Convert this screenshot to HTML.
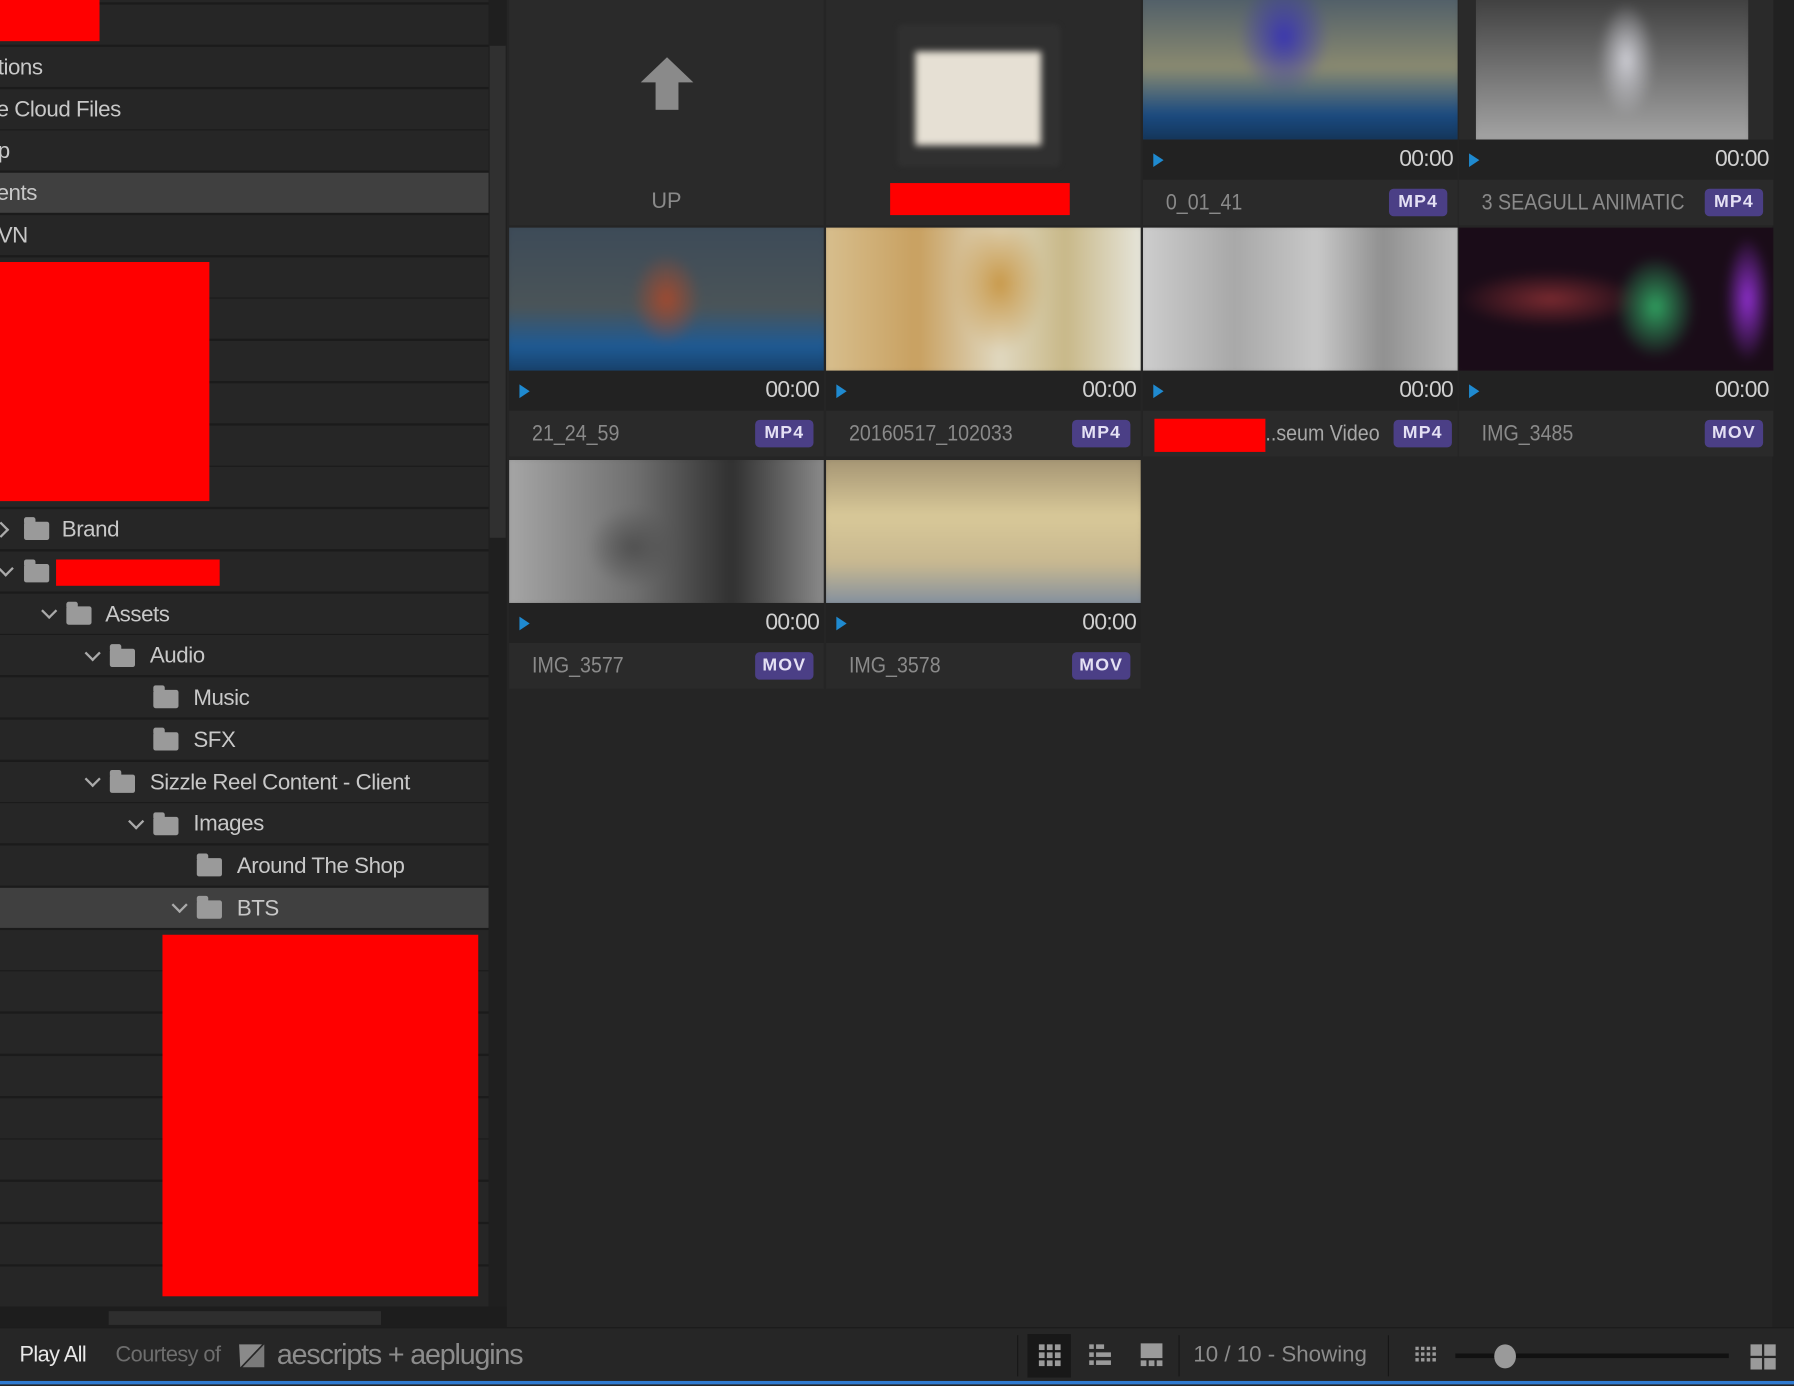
<!DOCTYPE html>
<html><head><meta charset="utf-8"><style>
html,body{margin:0;padding:0;background:#252525;overflow:hidden;width:1794px;height:1384px}
#s{position:absolute;left:0;top:0;width:1568px;height:1210px;transform:scale(1.14413);transform-origin:0 0;font-family:"Liberation Sans",sans-serif;background:#252525}
.a{position:absolute}
.row{position:absolute;left:0;width:427px;height:35px;background:#262626;border-bottom:2px solid #1b1b1b}
.t{position:absolute;color:#c8c8c8;font-size:19.5px;line-height:35px;white-space:nowrap;letter-spacing:-0.4px}
.fd{position:absolute;width:22px;height:16px;background:#9a9a9a;border-radius:2px}
.fd:before{content:"";position:absolute;left:0;top:-4px;width:10px;height:5px;background:#9a9a9a;border-radius:2px 2px 0 0}
.ch{position:absolute;width:8px;height:8px;border-right:2px solid #aaa;border-bottom:2px solid #aaa}
.card{position:absolute;width:275px;height:200px;background:#2a2a2a}
.clip{position:absolute;left:0;top:0;width:275px;height:125px;overflow:hidden}
.th{position:absolute;left:-6px;top:-6px;right:-6px;bottom:-6px;filter:blur(4px)}
.tm{position:absolute;left:0;top:125px;width:275px;height:35px;background:#222}
.pl{position:absolute;left:9px;top:12px;width:0;height:0;border-left:9px solid #1f8ad0;border-top:6px solid transparent;border-bottom:6px solid transparent}
.tt{position:absolute;right:4px;top:0;line-height:35px;color:#d0d0d0;font-size:20px;letter-spacing:-0.6px}
.lb{position:absolute;left:20px;top:160px;line-height:40px;color:#8a8a8a;font-size:19.5px;white-space:nowrap;transform:scaleX(0.88);transform-origin:0 50%}
.bd{position:absolute;right:9px;top:168px;width:51px;height:24px;background:#4b3f86;border-radius:4px;color:#e4e0f4;font-weight:bold;font-size:15.5px;line-height:24px;text-align:center;letter-spacing:1px}
.sep{position:absolute;top:1167px;width:1px;height:36px;background:#171717}
</style></head><body><div id="s">
<div class="a" style="left:0;top:0;width:427px;height:1142px;background:#1b1b1b"></div>
<div class="row" style="top:-33px"></div>
<div class="row" style="top:4px"></div>
<div class="row" style="top:41px"></div>
<div class="row" style="top:78px"></div>
<div class="row" style="top:114px"></div>
<div class="row" style="top:151px;background:#404040"></div>
<div class="row" style="top:188px"></div>
<div class="row" style="top:225px"></div>
<div class="row" style="top:261px"></div>
<div class="row" style="top:298px"></div>
<div class="row" style="top:335px"></div>
<div class="row" style="top:372px"></div>
<div class="row" style="top:408px"></div>
<div class="row" style="top:445px"></div>
<div class="row" style="top:482px"></div>
<div class="row" style="top:519px"></div>
<div class="row" style="top:555px"></div>
<div class="row" style="top:592px"></div>
<div class="row" style="top:629px"></div>
<div class="row" style="top:666px"></div>
<div class="row" style="top:702px"></div>
<div class="row" style="top:739px"></div>
<div class="row" style="top:776px;background:#404040"></div>
<div class="row" style="top:813px"></div>
<div class="row" style="top:849px"></div>
<div class="row" style="top:886px"></div>
<div class="row" style="top:923px"></div>
<div class="row" style="top:960px"></div>
<div class="row" style="top:996px"></div>
<div class="row" style="top:1033px"></div>
<div class="row" style="top:1070px"></div>
<div class="row" style="top:1107px"></div>
<div class="a" style="left:0;top:0;width:87px;height:36px;background:#f00"></div>
<div class="t" style="left:-2px;top:42px">tions</div>
<div class="t" style="left:-3px;top:79px">e Cloud Files</div>
<div class="t" style="left:-2px;top:115px">p</div>
<div class="t" style="left:-3px;top:152px">ents</div>
<div class="t" style="left:-2px;top:189px">VN</div>
<div class="a" style="left:0;top:229px;width:183px;height:209px;background:#f00"></div>
<div class="ch" style="left:-4px;top:458px;transform:rotate(-45deg)"></div>
<div class="fd" style="left:21px;top:456px"></div><div class="t" style="left:54px;top:446px">Brand</div>
<div class="ch" style="left:0px;top:492px;transform:rotate(45deg)"></div>
<div class="fd" style="left:21px;top:493px"></div>
<div class="a" style="left:49px;top:489px;width:143px;height:23px;background:#f00"></div>
<div class="ch" style="left:38px;top:529px;transform:rotate(45deg)"></div>
<div class="fd" style="left:58px;top:530px"></div><div class="t" style="left:92px;top:520px">Assets</div>
<div class="ch" style="left:76px;top:566px;transform:rotate(45deg)"></div>
<div class="fd" style="left:96px;top:567px"></div><div class="t" style="left:131px;top:556px">Audio</div>
<div class="fd" style="left:134px;top:603px"></div><div class="t" style="left:169px;top:593px">Music</div>
<div class="fd" style="left:134px;top:640px"></div><div class="t" style="left:169px;top:630px">SFX</div>
<div class="ch" style="left:76px;top:676px;transform:rotate(45deg)"></div>
<div class="fd" style="left:96px;top:677px"></div><div class="t" style="left:131px;top:667px">Sizzle Reel Content - Client</div>
<div class="ch" style="left:114px;top:713px;transform:rotate(45deg)"></div>
<div class="fd" style="left:134px;top:714px"></div><div class="t" style="left:169px;top:703px">Images</div>
<div class="fd" style="left:172px;top:750px"></div><div class="t" style="left:207px;top:740px">Around The Shop</div>
<div class="ch" style="left:152px;top:786px;transform:rotate(45deg)"></div>
<div class="fd" style="left:172px;top:787px"></div><div class="t" style="left:207px;top:777px">BTS</div>
<div class="a" style="left:142px;top:817px;width:276px;height:316px;background:#f00"></div>
<div class="a" style="left:427px;top:0;width:16px;height:1142px;background:#1f1f1f"></div>
<div class="a" style="left:428px;top:40px;width:14px;height:430px;background:#303030"></div>
<div class="a" style="left:0;top:1142px;width:443px;height:18px;background:#1d1d1d"></div>
<div class="a" style="left:95px;top:1146px;width:238px;height:12px;background:#2e2e2e"></div>
<div class="a" style="left:1549px;top:0;width:19px;height:1160px;background:#212121"></div>
<div class="card" style="left:445px;top:-3px;height:200px"><div class="a" style="left:115px;top:53px;width:0;height:0;border-left:23px solid transparent;border-right:23px solid transparent;border-bottom:22px solid #8a8a8a"></div><div class="a" style="left:128px;top:74px;width:20px;height:25px;background:#8a8a8a"></div><div class="a" style="left:0;top:160px;width:275px;text-align:center;line-height:40px;color:#8a8a8a;font-size:19px">UP</div></div>
<div class="card" style="left:722px;top:-3px;height:200px"><div class="a" style="left:62px;top:24px;width:143px;height:125px;background:#303030;border-radius:5px;filter:blur(2px)"></div><div class="a" style="left:78px;top:48px;width:110px;height:82px;background:#e6e0d4;filter:blur(3px)"></div><div class="a" style="left:56px;top:163px;width:157px;height:28px;background:#f00"></div></div>
<div class="card" style="left:999px;top:-3px"><div class="clip"><div class="th" style="background:radial-gradient(ellipse 40px 50px at 45% 30%,#3a36b0,transparent),linear-gradient(#4a5a68 0%,#8a8a70 50%,#1a4a80 80%,#123050 100%)"></div></div><div class="tm"><div class="pl"></div><div class="tt">00:00</div></div><div class="lb">0_01_41</div><div class="bd">MP4</div></div>
<div class="card" style="left:1275px;top:-3px"><div class="clip" style="left:15px;width:238px"><div class="th" style="background:radial-gradient(ellipse 25px 50px at 55% 45%,#cfcfd6,transparent),linear-gradient(#3a3a3a,#a8a8a8)"></div></div><div class="tm"><div class="pl"></div><div class="tt">00:00</div></div><div class="lb">3 SEAGULL ANIMATIC</div><div class="bd">MP4</div></div>
<div class="card" style="left:445px;top:199px"><div class="clip"><div class="th" style="background:radial-gradient(ellipse 30px 40px at 50% 50%,#a04a30,transparent),linear-gradient(#3c4a58 0%,#4a5458 55%,#1e5a94 80%,#153a60 100%)"></div></div><div class="tm"><div class="pl"></div><div class="tt">00:00</div></div><div class="lb">21_24_59</div><div class="bd">MP4</div></div>
<div class="card" style="left:722px;top:199px"><div class="clip"><div class="th" style="background:radial-gradient(ellipse 40px 60px at 55% 40%,#c89848,transparent),linear-gradient(90deg,#d8c090 0%,#c8a060 30%,#e0d8c0 55%,#c8b888 75%,#e8e8e0 100%)"></div></div><div class="tm"><div class="pl"></div><div class="tt">00:00</div></div><div class="lb">20160517_102033</div><div class="bd">MP4</div></div>
<div class="card" style="left:999px;top:199px"><div class="clip"><div class="th" style="background:linear-gradient(90deg,#d0d0d0 0%,#a8a8a8 30%,#c8c8c8 55%,#909090 75%,#c0c0c0 100%)"></div></div><div class="tm"><div class="pl"></div><div class="tt">00:00</div></div><div class="a" style="left:10px;top:167px;width:97px;height:29px;background:#f00"></div><div class="lb" style="left:107px;color:#a8a8a8">..seum Video</div><div class="bd" style="right:5px">MP4</div></div>
<div class="card" style="left:1275px;top:199px"><div class="clip"><div class="th" style="background:radial-gradient(ellipse 35px 45px at 62% 55%,#30a060,transparent),radial-gradient(ellipse 20px 55px at 90% 50%,#9030d0,transparent),radial-gradient(ellipse 80px 25px at 30% 50%,#7a2a30,transparent),#1a0c18"></div></div><div class="tm"><div class="pl"></div><div class="tt">00:00</div></div><div class="lb">IMG_3485</div><div class="bd">MOV</div></div>
<div class="card" style="left:445px;top:402px"><div class="clip"><div class="th" style="background:radial-gradient(ellipse 40px 35px at 40% 60%,#505050,transparent),linear-gradient(90deg,#a8a8a8,#707070 40%,#303030 70%,#909090)"></div></div><div class="tm"><div class="pl"></div><div class="tt">00:00</div></div><div class="lb">IMG_3577</div><div class="bd">MOV</div></div>
<div class="card" style="left:722px;top:402px"><div class="clip"><div class="th" style="background:linear-gradient(#a09070 0%,#d8c898 40%,#c8b890 70%,#7a8aa0 100%)"></div></div><div class="tm"><div class="pl"></div><div class="tt">00:00</div></div><div class="lb">IMG_3578</div><div class="bd">MOV</div></div>
<div class="a" style="left:0;top:1160px;width:1568px;height:50px;background:#262626;border-top:1px solid #1a1a1a"></div>
<div class="a" style="left:17px;top:1172px;color:#e8e8e8;font-size:19px;line-height:26px;letter-spacing:-0.5px">Play All</div>
<div class="a" style="left:101px;top:1172px;color:#6e6e6e;font-size:19px;line-height:26px;letter-spacing:-0.5px">Courtesy of</div>
<svg class="a" style="left:206px;top:1171px" width="28" height="28" viewBox="0 0 28 28"><path d="M3 4h20l-19 20z" fill="#8a8a8a"/><path d="M25 4v20H6z" fill="#7a7a7a"/></svg>
<div class="a" style="left:242px;top:1167px;color:#8c8c8c;font-size:25px;line-height:34px;letter-spacing:-1px">aescripts + aeplugins</div>
<div class="sep" style="left:889px"></div>
<div class="a" style="left:898px;top:1166px;width:38px;height:38px;background:#181818"></div>
<svg class="a" style="left:907px;top:1174px" width="22" height="22"><g fill="#9a9a9a"><rect x="1" y="1" width="5" height="5"/><rect x="8" y="1" width="5" height="5"/><rect x="15" y="1" width="5" height="5"/><rect x="1" y="8" width="5" height="5"/><rect x="8" y="8" width="5" height="5"/><rect x="15" y="8" width="5" height="5"/><rect x="1" y="15" width="5" height="5"/><rect x="8" y="15" width="5" height="5"/><rect x="15" y="15" width="5" height="5"/></g></svg>
<svg class="a" style="left:951px;top:1174px" width="22" height="22"><g fill="#9a9a9a"><rect x="1" y="1" width="4" height="4"/><rect x="7" y="1" width="7" height="4"/><rect x="1" y="8" width="4" height="4"/><rect x="7" y="8" width="13" height="4"/><rect x="1" y="15" width="4" height="4"/><rect x="7" y="15" width="13" height="4"/></g></svg>
<svg class="a" style="left:996px;top:1174px" width="22" height="22"><g fill="#9a9a9a"><rect x="1" y="0" width="19" height="13"/><rect x="1" y="15" width="5" height="5"/><rect x="8" y="15" width="5" height="5"/><rect x="15" y="15" width="5" height="5"/></g></svg>
<div class="sep" style="left:1030px"></div>
<div class="a" style="left:1043px;top:1171px;color:#8c8c8c;font-size:19.5px;line-height:26px">10 / 10 - Showing</div>
<div class="sep" style="left:1213px"></div>
<svg class="a" style="left:1237px;top:1177px" width="20" height="18"><g fill="#9a9a9a"><rect x="0" y="0" width="3" height="3"/><rect x="5" y="0" width="3" height="3"/><rect x="10" y="0" width="3" height="3"/><rect x="15" y="0" width="3" height="3"/><rect x="0" y="5" width="3" height="3"/><rect x="5" y="5" width="3" height="3"/><rect x="10" y="5" width="3" height="3"/><rect x="15" y="5" width="3" height="3"/><rect x="0" y="10" width="3" height="3"/><rect x="5" y="10" width="3" height="3"/><rect x="10" y="10" width="3" height="3"/><rect x="15" y="10" width="3" height="3"/></g></svg>
<div class="a" style="left:1272px;top:1183px;width:239px;height:4px;background:#111"></div>
<div class="a" style="left:1306px;top:1175px;width:19px;height:21px;border-radius:50%;background:#9a9a9a"></div>
<svg class="a" style="left:1529px;top:1174px" width="24" height="24"><g fill="#9a9a9a"><rect x="1" y="1" width="10" height="10"/><rect x="13" y="1" width="10" height="10"/><rect x="1" y="13" width="10" height="10"/><rect x="13" y="13" width="10" height="10"/></g></svg>
<div class="a" style="left:0;top:1207px;width:1568px;height:3px;background:#2f7ad0"></div>
</div></body></html>
